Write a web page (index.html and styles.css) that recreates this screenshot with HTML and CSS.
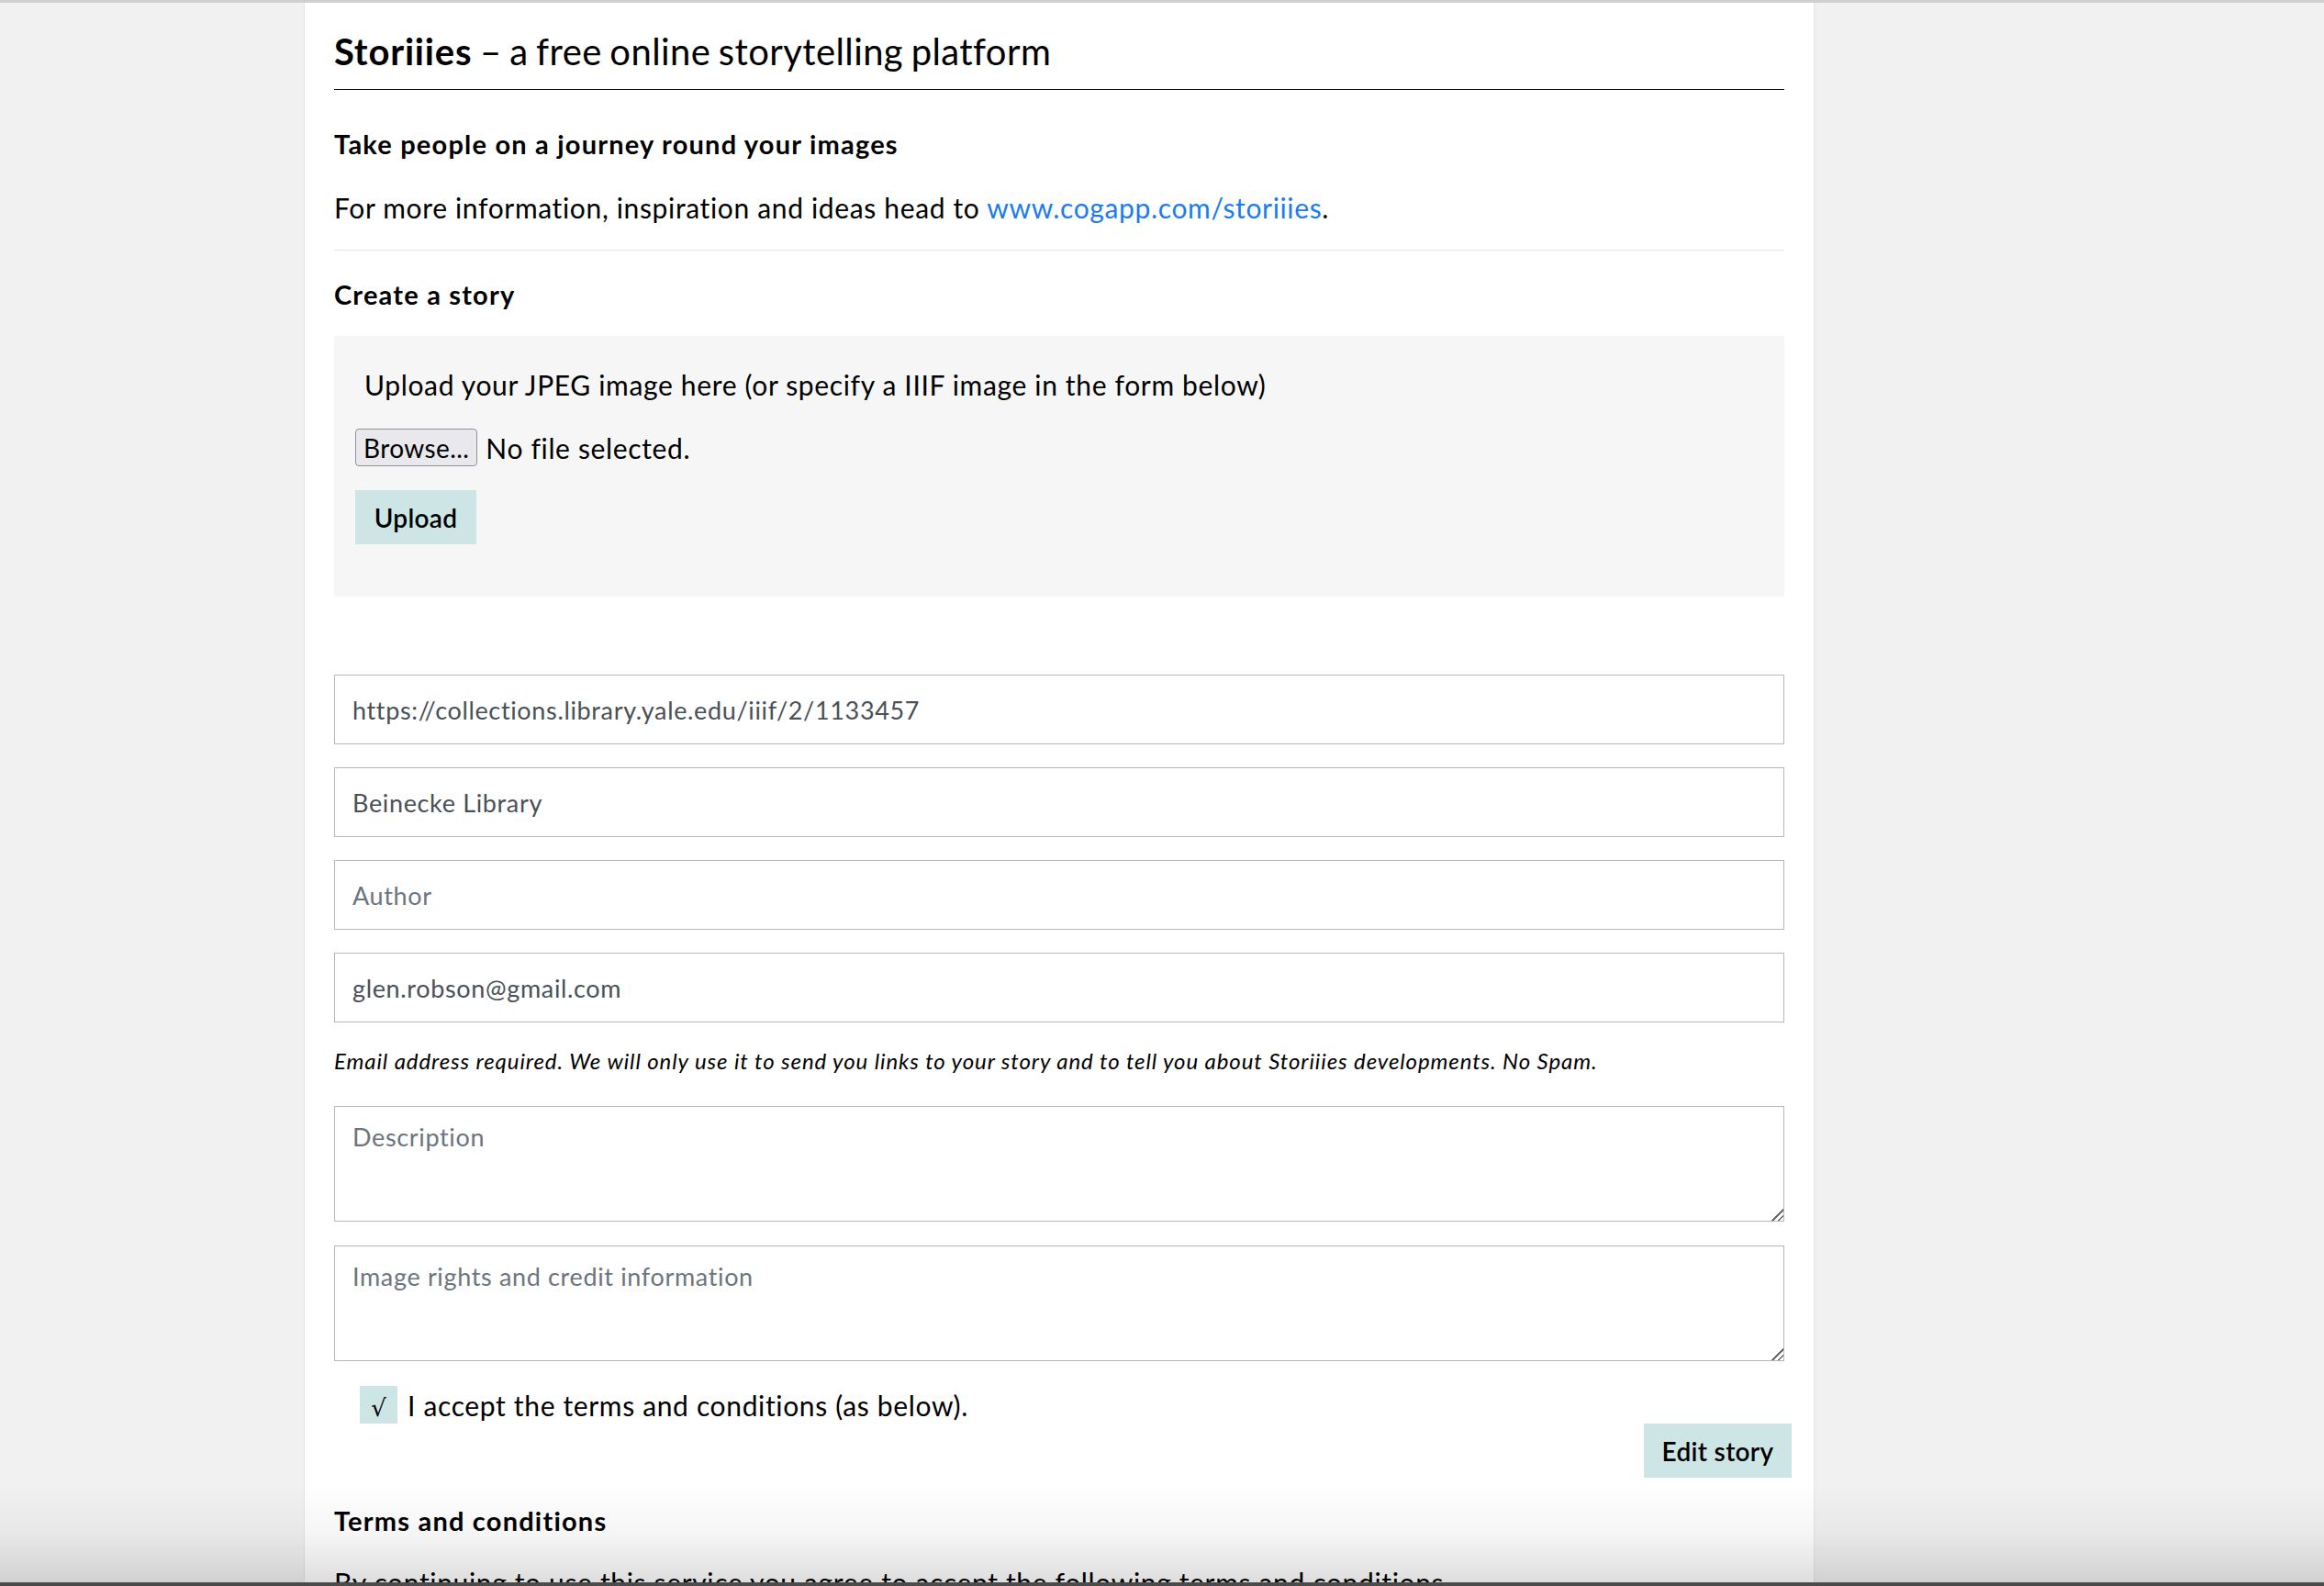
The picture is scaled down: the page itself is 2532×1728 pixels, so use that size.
FILE: index.html
```html
<!DOCTYPE html>
<html lang="en">
<head>
<meta charset="utf-8">
<title>Storiiies – a free online storytelling platform</title>
<link rel="stylesheet" href="styles.css">
</head>
<body>
<div class="topbar"></div>
<div class="page">
  <main class="panel">
    <h1 class="title"><strong>Storiiies</strong> – a free online storytelling platform</h1>
    <h2 class="heading lead">Take people on a journey round your images</h2>
    <p class="text info">For more information, inspiration and ideas head to <a class="link" href="#">www.cogapp.com/storiiies</a>.</p>
    <hr class="divider">
    <h2 class="heading create">Create a story</h2>
    <section class="upload-box">
      <p class="text upload-text">Upload your JPEG image here (or specify a IIIF image in the form below)</p>
      <div class="file-row">
        <span class="browse">Browse...</span>
        <span class="file-status">No file selected.</span>
      </div>
      <button class="btn upload-btn" type="button">Upload</button>
    </section>
    <form class="story-form">
      <input class="field" type="text" value="https://collections.library.yale.edu/iiif/2/1133457">
      <input class="field" type="text" value="Beinecke Library">
      <input class="field" type="text" placeholder="Author">
      <input class="field" type="text" value="glen.robson@gmail.com">
      <p class="note">Email address required. We will only use it to send you links to your story and to tell you about Storiiies developments. No Spam.</p>
      <textarea class="area area-desc" placeholder="Description"></textarea>
      <textarea class="area" placeholder="Image rights and credit information"></textarea>
      <label class="accept"><span class="check">√</span><span class="accept-text">I accept the terms and conditions (as below).</span></label>
      <div class="actions"><button class="btn edit-btn" type="button">Edit story</button></div>
    </form>
    <h2 class="heading terms">Terms and conditions</h2>
    <p class="text terms-text">By continuing to use this service you agree to accept the following terms and conditions.</p>
    <p class="text">Storiiies is provided free of charge by Cogapp. Stories you create are public and may be viewed by anyone with the link.</p>
  </main>
</div>
<div class="shade"></div>
</body>
</html>
```

FILE: styles.css
```css
html, body {
  margin: 0;
  padding: 0;
}

body {
  background: #f1f1f1;
  font-family: Lato, "Noto Sans", "Liberation Sans", sans-serif;
  color: #000;
  overflow: hidden;
  height: 1728px;
}

.topbar {
  height: 3px;
  background: #cfcfcf;
}

.page {
  display: flex;
}

.panel {
  margin-left: 331px;
  width: 1580px;
  padding: 0 32px 200px 32px;
  background: #fff;
  border-left: 1px solid #e4e4e4;
  border-right: 1px solid #e4e4e4;
  display: flex;
  flex-direction: column;
}

.title {
  margin: 29px 0 0 0;
  padding-bottom: 17px;
  border-bottom: 1px solid #111;
  font-size: 40px;
  line-height: 48px;
  font-weight: 400;
  letter-spacing: 0.4px;
  word-spacing: -2px;
}

.title strong {
  font-weight: 700;
  letter-spacing: 0.8px;
}

.heading {
  margin: 0;
  font-size: 29px;
  line-height: 36px;
  font-weight: 700;
  letter-spacing: 1.2px;
}

.lead {
  margin-top: 41px;
}

.text {
  margin: 0;
  font-size: 30px;
  line-height: 40px;
  letter-spacing: 0.65px;
}

.info {
  margin-top: 31px;
}

.link {
  color: #1a7cf0;
  text-decoration: none;
}

.divider {
  margin: 26px 0 0 0;
  border: 0;
  border-top: 1px solid #e6e6e6;
  height: 0;
}

.create {
  margin-top: 30px;
}

.upload-box {
  margin-top: 27px;
  background: #f6f6f6;
  padding: 33px 23px 57px 23px;
  display: flex;
  flex-direction: column;
  align-items: flex-start;
}

.upload-text {
  padding-left: 10px;
}

.file-row {
  margin-top: 28px;
  display: flex;
  align-items: center;
  gap: 9px;
}

.browse {
  box-sizing: border-box;
  height: 41px;
  padding: 0 8px;
  display: flex;
  align-items: center;
  background: #e9e9ed;
  border: 1px solid #8f8f9d;
  border-radius: 4px;
  font-size: 28px;
  letter-spacing: 0.4px;
}

.file-status {
  font-size: 30px;
  letter-spacing: 0.65px;
}

.btn {
  border: 0;
  background: #cde6e5;
  font-family: Lato, "Noto Sans", "Liberation Sans", sans-serif;
  font-size: 28px;
  font-weight: 600;
  letter-spacing: 0.3px;
  color: #000;
  height: 59px;
  padding: 0 19px;
  cursor: pointer;
}

.upload-btn {
  margin-top: 26px;
  width: 132px;
}

.story-form {
  margin-top: 85px;
  display: flex;
  flex-direction: column;
}

.field {
  box-sizing: border-box;
  height: 76px;
  margin: 0 0 25px 0;
  padding: 0 19px;
  border: 1px solid #b8b8b8;
  border-radius: 0;
  font-family: Lato, "Noto Sans", "Liberation Sans", sans-serif;
  font-size: 27px;
  letter-spacing: 0.65px;
  color: #495057;
  background: #fff;
  outline: none;
}

.field::placeholder,
.area::placeholder {
  color: #6c757d;
  opacity: 1;
}

.note {
  margin: 1px 0 33px 0;
  font-size: 24px;
  line-height: 32px;
  font-style: italic;
  letter-spacing: 0.9px;
}

.area {
  box-sizing: border-box;
  height: 126px;
  margin: 0 0 26px 0;
  padding: 16px 19px;
  border: 1px solid #b8b8b8;
  border-radius: 0;
  font-family: Lato, "Noto Sans", "Liberation Sans", sans-serif;
  font-size: 27px;
  letter-spacing: 0.65px;
  color: #495057;
  background: #fff;
  outline: none;
  resize: vertical;
}

.area::-webkit-resizer {
  background:
    linear-gradient(135deg, #fff 0 52%, transparent 52%),
    repeating-linear-gradient(135deg, #fff 0 3px, #6a6a6a 3px 4.5px);
}

.accept {
  margin: 1px 0 0 28px;
  display: flex;
  align-items: center;
  gap: 11px;
  font-size: 30px;
  letter-spacing: 0.65px;
}

.check {
  width: 41px;
  height: 41px;
  background: #cde6e5;
  display: flex;
  align-items: flex-end;
  justify-content: center;
  font-size: 26px;
  line-height: 34px;
  font-family: "DejaVu Sans", sans-serif;
  letter-spacing: 0;
}

.actions {
  display: flex;
  justify-content: flex-end;
  margin-right: -8px;
}

.edit-btn {
  width: 161px;
  padding: 0 15px;
}

.terms {
  margin-top: 29px;
}

.terms-text {
  margin-top: 29px;
}

.shade {
  position: fixed;
  left: 0;
  right: 0;
  bottom: 0;
  height: 110px;
  background:
    linear-gradient(to bottom, rgba(0,0,0,0) 0%, rgba(0,0,0,0.04) 50%, rgba(0,0,0,0.13) 96%, #4b4b4b 96.4%, #4b4b4b 100%);
  pointer-events: none;
}
```
